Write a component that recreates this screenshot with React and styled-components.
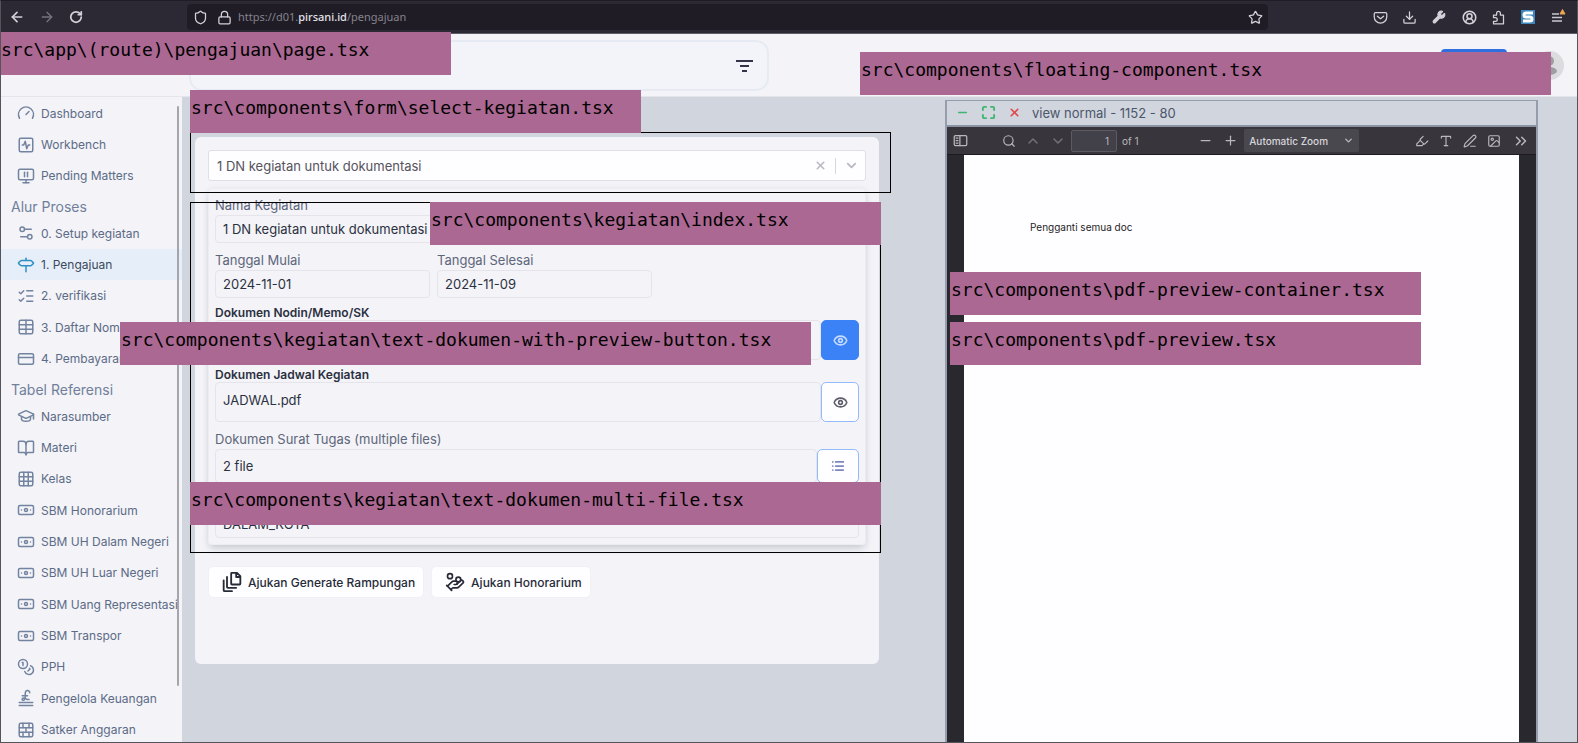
import React from 'react';
import styled, { createGlobalStyle } from 'styled-components';
import {
  ArrowLeft, ArrowRight, RotateCw, Shield, Lock, Star, Download, Wrench, CircleUserRound,
  Gauge, SquareActivity, MonitorPause, Settings2, Signpost, ListChecks, Table, CreditCard,
  GraduationCap, BookOpen, Grid3x3, Banknote, Coins, BrickWall, Minus, Plus, Maximize, X,
  ChevronDown, ChevronUp, Search, ChevronsRight, Image, Type, Highlighter, PenLine, Eye, List,
  HandCoins,
} from 'lucide-react';

const GlobalStyle = createGlobalStyle`
  * { box-sizing: border-box; }
  html, body, #root { height: 100%; }
  body {
    margin: 0;
    overflow: hidden;
    font-family: Inter, "Liberation Sans", sans-serif;
    color: #374151;
    background: #d1d5dd;
  }
  button, input, select { font: inherit; color: inherit; margin: 0; }
`;

const Page = styled.div`
  position: relative;
  height: 100%;
  min-height: 0;
  display: flex;
  flex-direction: column;
  overflow: hidden;
  border: 1px solid #55535c;
  border-top-color: #1f1c26;
`;

/* browser chrome */
const BrowserBar = styled.header`
  flex: none;
  height: 33px;
  display: flex;
  align-items: center;
  background: #2c2934;
  border-bottom: 1px solid #5d5b66;
  color: #d3d2d8;
`;
const IconButton = styled.button`
  flex: none;
  width: ${(p) => p.$w || 30}px;
  height: 22px;
  padding: 0;
  border: 0;
  background: none;
  display: grid;
  place-items: center;
  color: ${(p) => p.$color || 'inherit'};
`;
const NavGroup = styled.nav`
  display: flex;
  width: 186px;
`;
const UrlBar = styled.div`
  flex: 1;
  height: 26px;
  display: flex;
  align-items: center;
  background: #1f1c26;
  border-radius: 4px;
`;
const Url = styled.span`
  flex: 1;
  padding-left: 2px;
  font: 11px/16px "Noto Sans", sans-serif;
  color: #85838c;
  b { font-weight: 500; color: #e4e3e8; }
`;
const Extensions = styled.div`
  display: flex;
  width: 309px;
  justify-content: flex-end;
  padding-right: 4px;
`;

/* application header */
const AppHeader = styled.div`
  flex: none;
  height: 63px;
  display: flex;
  align-items: center;
  justify-content: space-between;
  padding: 0 13px 0 188px;
  background: #f3f3f8;
  border-bottom: 1px solid #e4e5eb;
`;
const SearchBox = styled.div`
  width: 580px;
  height: 51px;
  display: flex;
  align-items: center;
  justify-content: flex-end;
  padding-right: 8px;
  background: #f2f4fa;
  border: 2px solid #e6ebf3;
  border-radius: 13px;
  color: #35324a;
`;
const Account = styled.div`
  display: flex;
  align-items: center;
  gap: 28px;
`;
const PrimaryButton = styled.button`
  width: 66px;
  height: 32px;
  border: 0;
  border-radius: 4px;
  background: #2f6fe0;
`;
const Avatar = styled.span`
  width: 29px;
  height: 29px;
  border-radius: 50%;
  overflow: hidden;
  background: #dcdcdf;
`;

const Body = styled.div`
  flex: 1;
  min-height: 0;
  display: flex;
`;

/* sidebar */
const Sidebar = styled.aside`
  position: relative;
  flex: none;
  width: 181px;
  overflow: hidden;
  background: #f3f3f8;
`;
const ScrollThumb = styled.span`
  position: absolute;
  top: 9px;
  right: 3px;
  width: 2px;
  height: 580px;
  border-radius: 2px;
  background: #a5a6ab;
`;
const NavHeading = styled.h2`
  margin: 0;
  padding: 6px 0 0 10px;
  font-size: 14px;
  line-height: 20px;
  font-weight: 400;
  color: #71809a;
`;
const NavList = styled.ul`
  margin: 0;
  padding: 0;
  list-style: none;
`;
const NavItem = styled.li`
  height: 31px;
  &:nth-child(3n + 1) { height: 32px; }
`;
const NavLink = styled.a`
  height: 100%;
  display: flex;
  align-items: center;
  gap: 6px;
  padding-left: 16px;
  font-size: 12px;
  font-weight: 400;
  white-space: nowrap;
  text-decoration: none;
  color: ${(p) => (p.$active ? '#3c495c' : '#5c6b86')};
  background: ${(p) => (p.$active ? '#e6eff9' : 'transparent')};
  svg { flex: none; color: ${(p) => (p.$active ? '#2f8fc4' : '#7384a0')}; }
`;

/* workspace */
const Workspace = styled.main`
  flex: 1;
  min-width: 0;
  display: grid;
  grid-template-columns: minmax(0, 684fr) minmax(0, 593fr);
  column-gap: 66px;
  align-items: start;
  padding: 0 39px 0 13px;
  background: #d1d5dd;
`;
const Card = styled.section`
  margin-top: 40px;
  min-height: 527px;
  padding: 13px;
  border-radius: 6px;
  background: #f3f3f8;
`;
const Combo = styled.div`
  height: 31px;
  display: flex;
  align-items: center;
  padding-right: 3px;
  border: 1px solid #dfe0e6;
  border-radius: 3px;
  background: #fefdff;
  color: #b9bac2;
`;
const ComboInput = styled.input`
  flex: 1;
  min-width: 0;
  height: 28px;
  padding: 0 8px;
  border: 0;
  outline: 0;
  background: none;
  font-size: 13px;
  color: #55535c;
`;
const Divider = styled.span`
  width: 1px;
  height: 16px;
  margin: 0 4px;
  background: #d5d6dc;
`;
const Panel = styled.div`
  margin-top: 7px;
  padding: 6px;
  border: 1px solid #ececf1;
  border-radius: 4px;
  box-shadow: 0 5px 9px -2px rgba(30, 30, 60, 0.18), 0 0 6px rgba(30, 30, 60, 0.05);
  display: flex;
  flex-direction: column;
  gap: 7px;
`;
const FieldRow = styled.div`
  display: flex;
  gap: 7px;
`;
const Field = styled.div`
  width: ${(p) => p.$w || '100%'};
  padding-top: ${(p) => (p.$bare ? 20 : 0)}px;
`;
const FieldLabel = styled.label`
  display: block;
  font-size: ${(p) => (p.$strong ? 12 : 13)}px;
  font-weight: ${(p) => (p.$strong ? 600 : 400)};
  line-height: ${(p) => (p.$strong ? 15 : 20)}px;
  color: ${(p) => (p.$strong ? '#2b3040' : '#5d667a')};
`;
const Joined = styled.div`
  display: flex;
`;
const TextInput = styled.input`
  display: block;
  flex: 1;
  width: 100%;
  min-width: 0;
  height: ${(p) => p.$h || 28}px;
  padding: ${(p) => (p.$h === 40 ? '0 7px 4px' : '0 7px')};
  border: 1px solid #e4e4ea;
  border-radius: 4px;
  background: none;
  outline: 0;
  font-size: 13px;
  color: #2c3140;
`;
const SideButton = styled.button`
  flex: none;
  width: ${(p) => p.$w || 38}px;
  padding: 0;
  display: grid;
  place-items: center;
  border: 1px solid ${(p) => (p.$solid ? '#3b82f6' : '#93bbfa')};
  border-radius: 5px;
  background: ${(p) => (p.$solid ? '#3b82f6' : '#fefdff')};
  color: ${(p) => p.$color};
`;
const Actions = styled.div`
  display: flex;
  gap: 7px;
  margin-top: 21px;
`;
const ActionButton = styled.button`
  height: 32px;
  display: flex;
  align-items: center;
  gap: 6px;
  padding: 0 8px 0 13px;
  border: 1px solid #f0f0f5;
  border-radius: 5px;
  background: #fefdff;
  font-size: 12px;
  font-weight: 500;
  white-space: nowrap;
  color: #272b38;
`;

/* floating preview window */
const Floating = styled.section`
  align-self: stretch;
  display: flex;
  flex-direction: column;
  margin-top: 3px;
  border: 2px solid #969dac;
  border-width: 1px 2px 0;
`;
const TitleBar = styled.div`
  flex: none;
  height: 26px;
  display: flex;
  align-items: center;
  padding: 0 2px 1px;
  border-bottom: 2px solid #8b92a3;
  font-size: 13px;
  color: #4c566c;
`;
const WindowButton = styled(IconButton)`
  width: 26px;
`;
const WindowTitle = styled.span`
  padding-left: 5px;
`;
const Viewer = styled.div`
  flex: 1;
  display: flex;
  flex-direction: column;
  background: #2a282f;
`;
const ViewerBar = styled.div`
  flex: none;
  height: 28px;
  display: flex;
  align-items: center;
  justify-content: space-between;
  background: #38353c;
  border-bottom: 1px solid #1d1b22;
  color: #b9b8bd;
  font-size: 10px;
`;
const BarGroup = styled.div`
  display: flex;
  align-items: center;
`;
const FindButton = styled(IconButton)`
  margin-left: 24px;
`;
const PageNumber = styled.input`
  width: 46px;
  height: 22px;
  padding: 0 7px;
  border: 1px solid #5c5a62;
  border-radius: 2px;
  background: #424048;
  text-align: right;
`;
const PageCount = styled.span`
  padding: 0 5px;
`;
const ZoomSelect = styled.div`
  position: relative;
  display: flex;
  align-items: center;
  svg { position: absolute; right: 5px; pointer-events: none; }
  select {
    appearance: none;
    width: 115px;
    height: 23px;
    padding: 0 5px;
    border: 0;
    border-radius: 2px;
    background: #4a484f;
    font-weight: 500;
    color: #d6d5da;
  }
`;
const Sheet = styled.div`
  flex: 1;
  margin: 0 17px;
  padding: 64px 66px;
  background: #fefdff;
  font-size: 10px;
  line-height: 16px;
  color: #1f1d26;
`;

/* source path notes laid over the application */
const Note = styled.div`
  position: absolute;
  left: ${(p) => p.$x}px;
  top: ${(p) => p.$y}px;
  width: ${(p) => p.$w}px;
  height: 43px;
  padding-left: 1px;
  background: #ab6892;
  font: 18px/36px "DejaVu Sans Mono", monospace;
  white-space: nowrap;
  color: #000;
`;
const Frame = styled.div`
  position: absolute;
  left: ${(p) => p.$x}px;
  top: ${(p) => p.$y}px;
  width: ${(p) => p.$w}px;
  height: ${(p) => p.$h}px;
  border: 1px solid #000;
  pointer-events: none;
`;

const Svg = ({ size = 16, sw = 2, children }) => (
  <svg width={size} height={size} viewBox="0 0 24 24" fill="none" stroke="currentColor"
    strokeWidth={sw} strokeLinecap="round" strokeLinejoin="round">{children}</svg>
);
const SignIcon = ({ size }) => (
  <Svg size={size}>
    <path d="M3 22h18M3 18h18M17 5c0-4-6-4-6 1 0 4 1 8-2 9-3 0-3-3 0-3 3 0 4 3 7 2M7 9h7" />
  </Svg>
);
const StackedPagesIcon = () => (
  <Svg size={20} sw={2.2}>
    <path d="M12 1h6l4 4v9a1 1 0 0 1-1 1h-9a1 1 0 0 1-1-1V2a1 1 0 0 1 1-1zM17 1v5h5" />
    <path d="M6 6v12a1 1 0 0 0 1 1h10M2 10v12a1 1 0 0 0 1 1h9" />
  </Svg>
);
const PocketIcon = () => (
  <Svg size={15}>
    <path d="M4 4h16a2 2 0 0 1 2 2v5a10 10 0 0 1-20 0V6a2 2 0 0 1 2-2z" /><path d="m7 10 5 4 5-4" />
  </Svg>
);
const ExtensionIcon = () => (
  <Svg size={15}>
    <path d="M4 8h5V5a3 3 0 0 1 6 0v3h5v14H4v-4h3a3 3 0 0 0 0-6H4z" />
  </Svg>
);
const SidebarIcon = () => (
  <Svg size={15}>
    <rect x="2" y="4" width="20" height="16" rx="2" /><path d="M11 4v16M5 8h3M5 12h3M5 16h3" />
  </Svg>
);
const StylusIcon = () => (
  <svg width="14" height="14" viewBox="0 0 14 14">
    <rect width="14" height="14" fill="#3b87bd" />
    <path d="M12 3H5a2 2 0 0 0 0 4h4a2 2 0 0 1 0 4H2" fill="none" stroke="#fff" strokeWidth="3" />
  </svg>
);
const MenuIcon = () => (
  <svg width="18" height="18" viewBox="0 0 18 18">
    <path d="M3 6h7M3 9.500h10M3 13h10" stroke="#c9c8ce" strokeWidth="1.500" />
    <path d="M13.500 1.500 16 6h-5z" fill="#eda552" stroke="#eda552" strokeLinejoin="round" />
  </svg>
);
const FilterIcon = () => (
  <svg width="24" height="24" viewBox="0 0 24 24" stroke="#35324a" strokeWidth="2">
    <path d="M4 7h17M8 12h9M10 17h5" />
  </svg>
);
const AvatarIcon = () => (
  <svg width="29" height="29" viewBox="0 0 29 29" fill="#9d9da3">
    <circle cx="14" cy="10" r="5" /><ellipse cx="14" cy="20" rx="8" ry="4" />
  </svg>
);

const groups = [
  { items: [[Gauge, 'Dashboard'], [SquareActivity, 'Workbench'], [MonitorPause, 'Pending Matters']] },
  {
    title: 'Alur Proses',
    items: [[Settings2, '0. Setup kegiatan'], [Signpost, '1. Pengajuan'], [ListChecks, '2. verifikasi'],
      [Table, '3. Daftar Nomi'], [CreditCard, '4. Pembayaran']],
  },
  {
    title: 'Tabel Referensi',
    items: [[GraduationCap, 'Narasumber'], [BookOpen, 'Materi'], [Grid3x3, 'Kelas'], [Banknote, 'SBM Honorarium'],
      [Banknote, 'SBM UH Dalam Negeri'], [Banknote, 'SBM UH Luar Negeri'], [Banknote, 'SBM Uang Representasi'],
      [Banknote, 'SBM Transpor'], [Coins, 'PPH'], [SignIcon, 'Pengelola Keuangan'], [BrickWall, 'Satker Anggaran']],
  },
];

const notes = [
  [-1, 31, 451, 'src\\app\\(route)\\pengajuan\\page.tsx'],
  [189, 89, 451, 'src\\components\\form\\select-kegiatan.tsx'],
  [859, 51, 691, 'src\\components\\floating-component.tsx'],
  [429, 201, 451, 'src\\components\\kegiatan\\index.tsx'],
  [119, 321, 691, 'src\\components\\kegiatan\\text-dokumen-with-preview-button.tsx'],
  [189, 481, 691, 'src\\components\\kegiatan\\text-dokumen-multi-file.tsx'],
  [949, 271, 471, 'src\\components\\pdf-preview-container.tsx'],
  [949, 321, 471, 'src\\components\\pdf-preview.tsx'],
];

export default function App() {
  return (
    <Page>
      <GlobalStyle />
      <BrowserBar>
        <NavGroup>
          <IconButton $w={31} aria-label="Back"><ArrowLeft size={16} strokeWidth={2.5} /></IconButton>
          <IconButton $w={29} $color="#75737c" aria-label="Forward"><ArrowRight size={16} /></IconButton>
          <IconButton aria-label="Reload"><RotateCw size={14} strokeWidth={3} /></IconButton>
        </NavGroup>
        <UrlBar>
          <IconButton $w={26} aria-label="Tracking protection"><Shield size={15} /></IconButton>
          <IconButton $w={23} aria-label="Connection"><Lock size={15} /></IconButton>
          <Url>https://d01.<b>pirsani.id</b>/pengajuan</Url>
          <IconButton $w={26} aria-label="Bookmark"><Star size={15} /></IconButton>
        </UrlBar>
        <Extensions>
          <IconButton aria-label="Pocket"><PocketIcon /></IconButton>
          <IconButton $w={29} aria-label="Downloads"><Download size={15} /></IconButton>
          <IconButton aria-label="Developer tools"><Wrench size={14} fill="currentColor" /></IconButton>
          <IconButton aria-label="Account"><CircleUserRound size={15} strokeWidth={2.5} /></IconButton>
          <IconButton $w={29} aria-label="Extensions"><ExtensionIcon /></IconButton>
          <IconButton aria-label="Stylus"><StylusIcon /></IconButton>
          <IconButton aria-label="Menu"><MenuIcon /></IconButton>
        </Extensions>
      </BrowserBar>

      <AppHeader>
        <SearchBox><IconButton aria-label="Filter"><FilterIcon /></IconButton></SearchBox>
        <Account>
          <PrimaryButton aria-label="Account action" />
          <Avatar><AvatarIcon /></Avatar>
        </Account>
      </AppHeader>

      <Body>
        <Sidebar>
          {groups.map((g, i) => (
            <React.Fragment key={i}>
              {g.title && <NavHeading>{g.title}</NavHeading>}
              <NavList>
                {g.items.map(([Icon, text]) => (
                  <NavItem key={text}>
                    <NavLink href="#" $active={text === '1. Pengajuan'}><Icon size={18} />{text}</NavLink>
                  </NavItem>
                ))}
              </NavList>
            </React.Fragment>
          ))}
          <ScrollThumb />
        </Sidebar>

        <Workspace>
          <Card>
            <Combo>
              <ComboInput aria-label="Kegiatan" defaultValue="1 DN kegiatan untuk dokumentasi" />
              <IconButton $w={22} aria-label="Clear"><X size={13} strokeWidth={3} /></IconButton>
              <Divider />
              <IconButton $w={22} aria-label="Open"><ChevronDown size={15} strokeWidth={3} /></IconButton>
            </Combo>
            <Panel>
              <Field>
                <FieldLabel htmlFor="nama">Nama Kegiatan</FieldLabel>
                <TextInput id="nama" readOnly value="1 DN kegiatan untuk dokumentasi" />
              </Field>
              <FieldRow>
                <Field $w="215px">
                  <FieldLabel htmlFor="mulai">Tanggal Mulai</FieldLabel>
                  <TextInput id="mulai" readOnly value="2024-11-01" />
                </Field>
                <Field $w="215px">
                  <FieldLabel htmlFor="selesai">Tanggal Selesai</FieldLabel>
                  <TextInput id="selesai" readOnly value="2024-11-09" />
                </Field>
              </FieldRow>
              <Field>
                <FieldLabel $strong htmlFor="nodin">Dokumen Nodin/Memo/SK</FieldLabel>
                <Joined>
                  <TextInput $h={40} id="nodin" readOnly value="" />
                  <SideButton $solid $color="#c5dbff" aria-label="Preview nodin"><Eye size={15} strokeWidth={2.5} /></SideButton>
                </Joined>
              </Field>
              <Field>
                <FieldLabel $strong htmlFor="jadwal">Dokumen Jadwal Kegiatan</FieldLabel>
                <Joined>
                  <TextInput $h={40} id="jadwal" readOnly value="JADWAL.pdf" />
                  <SideButton $color="#5b5d68" aria-label="Preview jadwal"><Eye size={15} strokeWidth={2.5} /></SideButton>
                </Joined>
              </Field>
              <Field>
                <FieldLabel htmlFor="surat">Dokumen Surat Tugas (multiple files)</FieldLabel>
                <Joined>
                  <TextInput $h={34} id="surat" readOnly value="2 file" />
                  <SideButton $w={42} $color="#7c88bd" aria-label="Daftar file"><List size={14} strokeWidth={3} /></SideButton>
                </Joined>
              </Field>
              <Field $bare>
                <TextInput aria-label="Lokasi" readOnly value="DALAM_KOTA" />
              </Field>
            </Panel>
            <Actions>
              <ActionButton><StackedPagesIcon />Ajukan Generate Rampungan</ActionButton>
              <ActionButton><HandCoins size={20} />Ajukan Honorarium</ActionButton>
            </Actions>
          </Card>

          <Floating>
            <TitleBar>
              <WindowButton $color="#3fb573" aria-label="Minimize"><Minus size={13} strokeWidth={3} /></WindowButton>
              <WindowButton $color="#3fb573" aria-label="Maximize"><Maximize size={15} strokeWidth={3} /></WindowButton>
              <WindowButton $color="#e0474c" aria-label="Close"><X size={13} strokeWidth={3} /></WindowButton>
              <WindowTitle>view normal - 1152 - 80</WindowTitle>
            </TitleBar>
            <Viewer>
              <ViewerBar>
                <BarGroup>
                  <IconButton $w={26} aria-label="Toggle sidebar"><SidebarIcon /></IconButton>
                  <FindButton $w={24} aria-label="Find"><Search size={14} /></FindButton>
                  <IconButton $w={24} $color="#77757c" aria-label="Previous page"><ChevronUp size={16} /></IconButton>
                  <IconButton $w={26} $color="#77757c" aria-label="Next page"><ChevronDown size={16} /></IconButton>
                  <PageNumber aria-label="Page" defaultValue="1" />
                  <PageCount>of 1</PageCount>
                </BarGroup>
                <BarGroup>
                  <IconButton $w={22} aria-label="Zoom out"><Minus size={15} /></IconButton>
                  <IconButton $w={28} aria-label="Zoom in"><Plus size={15} /></IconButton>
                  <ZoomSelect>
                    <select aria-label="Zoom"><option>Automatic Zoom</option></select>
                    <ChevronDown size={11} strokeWidth={3} />
                  </ZoomSelect>
                </BarGroup>
                <BarGroup>
                  <IconButton $w={24} aria-label="Highlight"><Highlighter size={14} /></IconButton>
                  <IconButton $w={24} aria-label="Text"><Type size={14} /></IconButton>
                  <IconButton $w={24} aria-label="Draw"><PenLine size={14} /></IconButton>
                  <IconButton $w={24} aria-label="Image"><Image size={14} /></IconButton>
                  <IconButton $w={30} aria-label="More tools"><ChevronsRight size={18} /></IconButton>
                </BarGroup>
              </ViewerBar>
              <Sheet>Pengganti semua doc</Sheet>
            </Viewer>
          </Floating>
        </Workspace>
      </Body>

      <Frame $x={189} $y={131} $w={701} $h={61} />
      <Frame $x={189} $y={201} $w={691} $h={351} />
      {notes.map(([x, y, w, text]) => (
        <Note key={text} $x={x} $y={y} $w={w}>{text}</Note>
      ))}
    </Page>
  );
}
